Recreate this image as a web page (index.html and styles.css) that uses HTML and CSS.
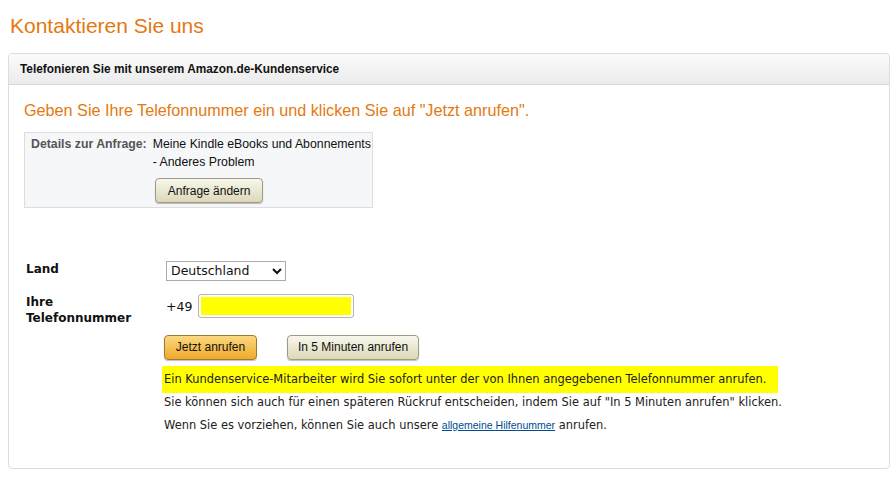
FILE: index.html
```html
<!DOCTYPE html>
<html lang="de">
<head>
  <meta charset="UTF-8" />
  <title>Kontaktieren Sie uns</title>
  <link rel="stylesheet" href="styles.css">
</head>
<body>
  <h1 class="page-title">Kontaktieren Sie uns</h1>

  <div class="box">
    <div class="box-head">Telefonieren Sie mit unserem Amazon.de-Kundenservice</div>
    <div class="box-body">
      <h2 class="lead">Geben Sie Ihre Telefonnummer ein und klicken Sie auf "Jetzt anrufen".</h2>

      <div class="details">
        <div class="details-label">Details zur Anfrage:</div>
        <div class="details-value">
          <div>Meine Kindle eBooks und Abonnements</div>
          <div>- Anderes Problem</div>
          <button class="btn btn-plain">Anfrage ändern</button>
        </div>
      </div>

      <div class="form">
        <label class="form-label" for="land">Land</label>
        <div class="form-field">
          <select id="land" class="select">
            <option>Deutschland</option>
          </select>
        </div>

        <label class="form-label" for="phone">Ihre Telefonnummer</label>
        <div class="form-field phone-row">
          <span class="prefix">+49</span>
          <input id="phone" class="phone" type="text">
        </div>

        <div></div>
        <div class="form-field actions-cell">
          <div class="actions">
            <button class="btn btn-primary">Jetzt anrufen</button>
            <button class="btn btn-plain">In 5 Minuten anrufen</button>
          </div>
          <p class="note"><span class="hl">Ein Kundenservice-Mitarbeiter wird Sie sofort unter der von Ihnen angegebenen Telefonnummer anrufen.</span></p>
          <p class="note">Sie können sich auch für einen späteren Rückruf entscheiden, indem Sie auf "In 5 Minuten anrufen" klicken.</p>
          <p class="note">Wenn Sie es vorziehen, können Sie auch unsere <a href="#" class="link">allgemeine Hilfenummer</a> anrufen.</p>
        </div>
      </div>
    </div>
  </div>
</body>
</html>
```

FILE: styles.css
```css
body {
  margin: 0 0 0 8px;
  font-family: "Liberation Sans", Arial, sans-serif;
  color: #111;
  background: #fff;
}
.page-title {
  margin: 13px 0 0 2px;
  font-size: 21px;
  font-weight: normal;
  line-height: 26px;
  color: #e47911;
}
.box {
  margin-top: 14px;
  border: 1px solid #ddd;
  border-radius: 4px;
  height: 416px;
  box-sizing: border-box;
}
.box-head {
  height: 30px;
  line-height: 30px;
  padding-left: 11px;
  font-size: 11.85px;
  font-weight: bold;
  color: #111;
  background: linear-gradient(#fbfbfb, #ebebeb);
  border-bottom: 1px solid #d9d9d9;
  border-radius: 4px 4px 0 0;
}
.box-body {
  padding: 15px 15px 30px 15px;
}
.lead {
  margin: 0;
  font-size: 16.2px;
  font-weight: normal;
  line-height: 20px;
  color: #e47911;
}
.details {
  display: flex;
  gap: 6px;
  width: 335px;
  margin-top: 12px;
  padding: 2px 6px 4px 6px;
  background: #f6f7f9;
  border: 1px solid #ddd;
  font-size: 12.3px;
  line-height: 18px;
  white-space: nowrap;
}
.details-label {
  font-weight: bold;
  color: #555;
}
.details-value .btn {
  margin: 7px 0 0 2px;
  padding: 0 12px;
}
.btn {
  height: 25px;
  padding: 0 10px;
  font-family: "Liberation Sans", Arial, sans-serif;
  font-size: 12px;
  color: #111;
  border-radius: 4px;
  cursor: pointer;
}
.btn-plain {
  background: linear-gradient(#f8f7ec, #dcd8b8);
  border: 1px solid #9e9a83;
  box-shadow: 0 1px 1px rgba(0, 0, 0, 0.25);
}
.btn-primary {
  background: linear-gradient(#fcd880, #f0a92a);
  border: 1px solid #9c7a30;
  box-shadow: 0 1px 1px rgba(0, 0, 0, 0.25);
  width: 93px;
}
.form {
  display: grid;
  grid-template-columns: 138px 1fr;
  row-gap: 12px;
  margin-top: 52px;
  padding-left: 2px;
  font-family: "DejaVu Sans", Verdana, sans-serif;
}
.form-label {
  padding-top: 1px;
  font-size: 12px;
  font-weight: bold;
  line-height: 16px;
  color: #111;
  width: 110px;
}
.select {
  margin-left: 2px;
  width: 120px;
  height: 20px;
  font-family: "DejaVu Sans", Verdana, sans-serif;
  font-size: 12.5px;
  border: 1px solid #aaa;
  background: #fff;
  color: #111;
}
.phone-row {
  display: flex;
  align-items: center;
  gap: 6px;
  margin-top: -6px;
}
.actions-cell {
  margin-top: -3px;
}
.prefix {
  margin-left: 2px;
  font-size: 12.5px;
}
.phone {
  width: 156px;
  height: 24px;
  box-sizing: border-box;
  border: 1px solid #b5b5b5;
  border-radius: 3px;
  background: #ffff00;
  box-shadow: inset 0 0 0 2px #fff;
}
.actions {
  display: flex;
  gap: 30px;
}
.note {
  margin: 0;
  font-size: 11.45px;
  line-height: 23px;
  color: #222;
}
.actions + .note {
  margin-top: 8px;
}
.hl {
  background: #ffff00;
  padding: 6px 12px 7px 2px;
  margin-left: -2px;
}
.link {
  font-family: "Liberation Sans", Arial, sans-serif;
  font-size: 10.5px;
  color: #004b91;
}
```
